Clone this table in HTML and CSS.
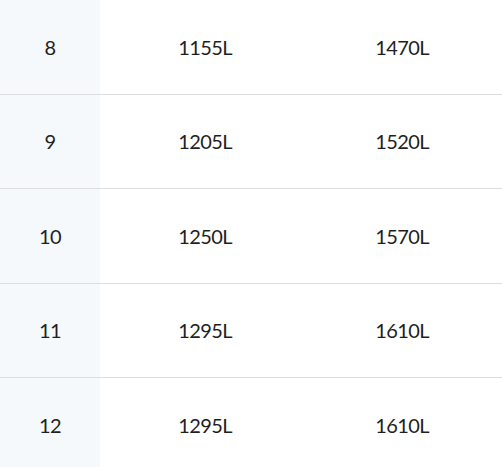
FILE: index.html
```html
<!DOCTYPE html>
<html>
<head>
<meta charset="utf-8">
<link rel="stylesheet" href="styles.css">
</head>
<body>
<div class="table">
  <div class="row"><div class="cell key">8</div><div class="cell">1155L</div><div class="cell last">1470L</div></div>
  <div class="row"><div class="cell key">9</div><div class="cell">1205L</div><div class="cell last">1520L</div></div>
  <div class="row"><div class="cell key">10</div><div class="cell">1250L</div><div class="cell last">1570L</div></div>
  <div class="row"><div class="cell key">11</div><div class="cell">1295L</div><div class="cell last">1610L</div></div>
  <div class="row"><div class="cell key">12</div><div class="cell">1295L</div><div class="cell last">1610L</div></div>
</div>
</body>
</html>
```
FILE: styles.css
```css
html, body {
  margin: 0;
  padding: 0;
  background: #fff;
}
body {
  font-family: Lato, "Open Sans", sans-serif;
  font-size: 20px;
  letter-spacing: -0.6px;
  color: #1f1f1f;
}
.table {
  display: flex;
  flex-direction: column;
}
.row {
  display: grid;
  grid-template-columns: 100px 210px 1fr;
  height: 93.5px;
  border-bottom: 1px solid #dedede;
}
.cell {
  display: flex;
  align-items: center;
  justify-content: center;
}
.key {
  background: #f5f9fc;
}
.last {
  padding-right: 8px;
}
```
